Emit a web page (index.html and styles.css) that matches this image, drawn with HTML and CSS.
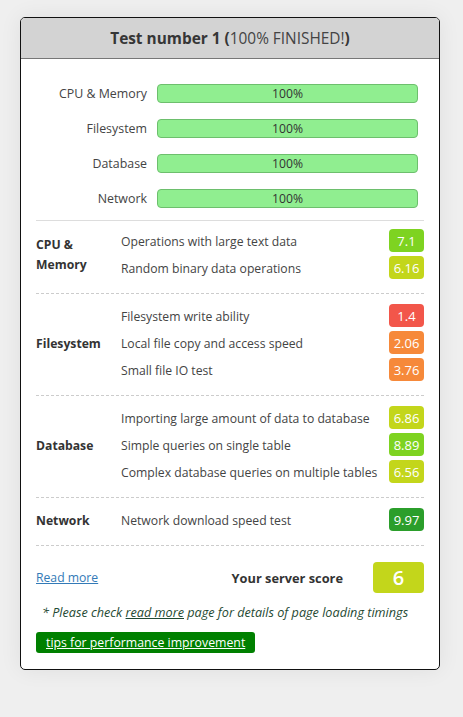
FILE: index.html
```html
<!DOCTYPE html>
<html lang="en">
<head>
<meta charset="utf-8">
<title>Test number 1</title>
<link rel="stylesheet" href="styles.css">
</head>
<body>
<div class="card">
  <div class="card-head"><b>Test number 1 (</b>100% FINISHED!<b>)</b></div>
  <div class="card-body">
    <div class="progress">
      <div class="p-label">CPU &amp; Memory</div><div class="bar">100%</div>
      <div class="p-label">Filesystem</div><div class="bar">100%</div>
      <div class="p-label">Database</div><div class="bar">100%</div>
      <div class="p-label">Network</div><div class="bar">100%</div>
    </div>

    <div class="section first">
      <div class="cat">CPU &amp;<br>Memory</div>
      <div class="tests">
        <div class="test"><span>Operations with large text data</span><span class="badge s-lime">7.1</span></div>
        <div class="test"><span>Random binary data operations</span><span class="badge s-yellow">6.16</span></div>
      </div>
    </div>
    <div class="section">
      <div class="cat">Filesystem</div>
      <div class="tests">
        <div class="test"><span>Filesystem write ability</span><span class="badge s-red">1.4</span></div>
        <div class="test"><span>Local file copy and access speed</span><span class="badge s-orange">2.06</span></div>
        <div class="test"><span>Small file IO test</span><span class="badge s-orange">3.76</span></div>
      </div>
    </div>
    <div class="section">
      <div class="cat">Database</div>
      <div class="tests">
        <div class="test"><span>Importing large amount of data to database</span><span class="badge s-yellow">6.86</span></div>
        <div class="test"><span>Simple queries on single table</span><span class="badge s-lime">8.89</span></div>
        <div class="test"><span>Complex database queries on multiple tables</span><span class="badge s-yellow">6.56</span></div>
      </div>
    </div>
    <div class="section">
      <div class="cat">Network</div>
      <div class="tests">
        <div class="test"><span>Network download speed test</span><span class="badge s-green">9.97</span></div>
      </div>
    </div>

    <div class="footer-row">
      <a class="read-more" href="#">Read more</a>
      <div class="score-wrap"><span class="score-label">Your server score</span><span class="score">6</span></div>
    </div>
    <p class="note">* Please check <a href="#">read more</a> page for details of page loading timings</p>
    <a class="tips" href="#">tips for performance improvement</a>
  </div>
</div>
</body>
</html>
```

FILE: styles.css
```css
* { box-sizing: border-box; }
html, body { margin: 0; }
body {
  background: #efefef;
  padding: 17px 20px;
  font-family: "Open Sans", "Noto Sans", sans-serif;
  font-size: 12.2px;
  color: #444;
}
.card {
  width: 420px;
  background: #fff;
  border: 1px solid #111;
  border-radius: 5px;
  box-shadow: 0 0 22px rgba(0, 0, 0, 0.07);
  overflow: hidden;
}
.card-head {
  height: 41px;
  background: #d3d3d3;
  border-bottom: 1px solid #777;
  display: flex;
  align-items: center;
  justify-content: center;
  font-size: 15.4px;
  color: #444;
}
.card-head b { color: #363636; font-weight: 700; }
.card-body { padding: 0 15px 16px; }

.progress {
  display: grid;
  grid-template-columns: 111px 1fr;
  column-gap: 10px;
  row-gap: 16px;
  padding: 25px 6px 12px 0;
  border-bottom: 1px solid #ddd;
  align-items: center;
}
.p-label { text-align: right; color: #444; font-size: 12.4px; }
.bar {
  height: 19px;
  background: #90ee90;
  border: 1px solid #6dbf6d;
  border-radius: 4px;
  text-align: center;
  line-height: 17px;
  color: #333;
}

.section {
  display: grid;
  grid-template-columns: 85px 1fr;
  align-items: center;
  padding: 8px 0 12px;
  border-bottom: 1px dashed #ccc;
}
.section.first { padding-top: 6px; }
.cat { font-weight: 700; color: #333; line-height: 20px; font-size: 12.2px; padding-top: 2px; }
.test {
  height: 27px;
  display: flex;
  align-items: center;
  justify-content: space-between;
}
.test > span:first-child { padding-top: 1px; }
.badge {
  width: 35px;
  height: 23px;
  border-radius: 4px;
  color: #fff;
  display: flex;
  align-items: center;
  justify-content: center;
  font-size: 13px;
}
.s-lime { background: #7ed321; }
.s-yellow { background: #c3d61b; }
.s-red { background: #f2564a; }
.s-orange { background: #f6893a; }
.s-green { background: #2b9e2b; }

.footer-row {
  margin-top: 16px;
  display: flex;
  align-items: center;
  justify-content: space-between;
  height: 31px;
}
.read-more { color: #337ab7; text-decoration: underline; }
.score-wrap { display: flex; align-items: center; gap: 30px; }
.score-label { font-weight: 700; font-size: 12.8px; color: #333; }
.score {
  width: 51px;
  height: 31px;
  background: #c3d61b;
  color: #fff;
  border-radius: 4px;
  display: flex;
  align-items: center;
  justify-content: center;
  font-size: 20px;
  font-weight: 600;
}
.note {
  margin: 9px 0 0;
  padding-left: 6px;
  line-height: 20px;
  font-style: italic;
  font-size: 12.65px;
  color: #1f4a33;
  white-space: nowrap;
}
.note a { color: #1f4a33; }
.tips {
  display: inline-block;
  margin-top: 10px;
  height: 21px;
  line-height: 21px;
  padding: 0 10px;
  background: #008000;
  color: #fff;
  border-radius: 3px;
  font-size: 12.3px;
}
```
